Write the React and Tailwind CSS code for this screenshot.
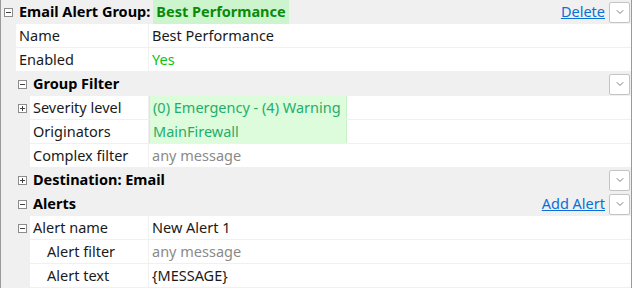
import { ChevronDown } from 'lucide-react';

const FONT = { fontFamily: '"Noto Sans", "Segoe UI", sans-serif' };

function Expander({ open }) {
  return (
    <svg width="9" height="9" viewBox="0 0 9 9" className="shrink-0">
      <rect x="0.5" y="0.5" width="8" height="8" fill="#fff" stroke="#8c8c8c" />
      <line x1="2" y1="4.5" x2="7" y2="4.5" stroke="#404040" />
      {!open && <line x1="4.5" y1="2" x2="4.5" y2="7" stroke="#404040" />}
    </svg>
  );
}

function DropBtn() {
  return (
    <button className="flex h-[21px] w-[21px] items-center justify-center rounded-[2px] border border-[#c4c4c4] bg-white text-[#555]">
      <ChevronDown size={12} strokeWidth={1.5} />
    </button>
  );
}

function Group({ level, open, title, highlight, link, button }) {
  const pad = level === 0 ? 'pl-[3px]' : 'pl-[17px]';
  return (
    <div className={`flex h-6 items-center bg-[#f0f0f0] ${pad} pr-px`}>
      <Expander open={open} />
      <div className="ml-[6px] flex h-full items-center text-[14.5px] font-bold text-black">
        {title}
        {highlight && <span className="ml-[3px] flex h-full items-center bg-[#cdf5cd] px-[3px] text-[#0a8a0a]">{highlight}</span>}
      </div>
      <div className="ml-auto flex items-center gap-[4px]">
        {link && <a href="#" className="text-[14.5px] text-[#0b6ed6] underline">{link}</a>}
        {button && <DropBtn />}
      </div>
    </div>
  );
}

function Prop({ indent, label, value, tone, labelPad, expander, green }) {
  const tones = {
    dark: 'text-[#1a1a1a]',
    yes: 'text-[#0ec20e]',
    muted: 'text-[#8a8a8a]',
    teal: 'text-[#1fae6a]',
  };
  return (
    <div className="flex h-6 bg-[#f0f0f0]">
      <div className={`flex shrink-0 items-center ${indent === 1 ? 'w-[15px]' : 'w-[29px] pl-[17px]'}`}>
        {expander && <Expander open={expander === 'open'} />}
      </div>
      <div className={`flex h-[23px] shrink-0 items-center bg-white text-[14.5px] text-[#1a1a1a] ${labelPad ? 'pl-[17px]' : 'pl-[3px]'} ${indent === 1 ? 'w-[132px]' : 'w-[118px]'}`}>
        {label}
      </div>
      <div className="w-px shrink-0" />
      <div className="flex h-[23px] flex-1 items-center bg-white">
        <div className={`flex h-full items-center pl-[3px] text-[14.5px] ${tones[tone]} ${green ? 'w-[198px] border-x border-[#c9f0c9] bg-[#dcfcdc]' : ''}`}>
          {value}
        </div>
      </div>
    </div>
  );
}

export default function App() {
  return (
    <div className="h-[288px] w-[632px] overflow-hidden border-x border-[#9a9a9a] bg-[#f0f0f0]" style={FONT}>
      <Group level={0} open title="Email Alert Group:" highlight="Best Performance" link="Delete" button />
      <Prop indent={1} label="Name" value="Best Performance" tone="dark" />
      <Prop indent={1} label="Enabled" value="Yes" tone="yes" />
      <Group level={1} open title="Group Filter" button />
      <Prop indent={2} label="Severity level" value="(0) Emergency - (4) Warning" tone="teal" expander="closed" green />
      <Prop indent={2} label="Originators" value="MainFirewall" tone="teal" green />
      <Prop indent={2} label="Complex filter" value="any message" tone="muted" />
      <Group level={1} open={false} title="Destination: Email" button />
      <Group level={1} open title="Alerts" link="Add Alert" button />
      <Prop indent={2} label="Alert name" value="New Alert 1" tone="dark" expander="open" />
      <Prop indent={2} label="Alert filter" value="any message" tone="muted" labelPad />
      <Prop indent={2} label="Alert text" value="{MESSAGE}" tone="dark" labelPad />
    </div>
  );
}
